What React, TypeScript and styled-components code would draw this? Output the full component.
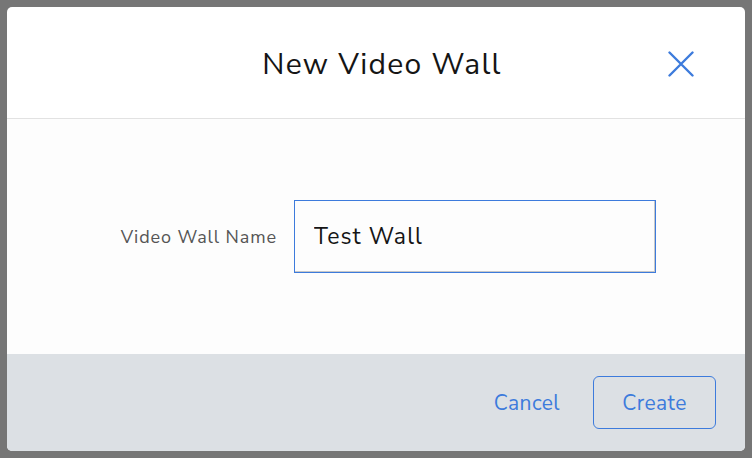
import React from "react";
import styled, { createGlobalStyle } from "styled-components";

const Global = createGlobalStyle`
  html, body { margin: 0; padding: 0; height: 100%; }
  body { background: #767676; font-family: "Nunito Sans", Lato, "Noto Sans", sans-serif; }
  #root { height: 100%; }
`;

const Backdrop = styled.div`
  width: 752px;
  height: 458px;
  padding: 7px;
  box-sizing: border-box;
  display: flex;
`;

const Dialog = styled.div`
  width: 738px;
  height: 444px;
  background: #ffffff;
  border-radius: 5px;
  overflow: hidden;
  display: flex;
  flex-direction: column;
`;

const Header = styled.div`
  height: 111px;
  border-bottom: 1px solid #e2e2e2;
  display: flex;
  align-items: center;
  justify-content: center;
  position: relative;
  flex-shrink: 0;
`;

const Title = styled.h1`
  margin: 3px 0 0 12px;
  font-size: 30px;
  font-weight: 400;
  color: #151515;
  letter-spacing: 1.3px;
`;

const CloseButton = styled.button`
  position: absolute;
  right: 51px;
  top: 44px;
  width: 26px;
  height: 26px;
  padding: 0;
  border: none;
  background: transparent;
  display: flex;
  align-items: center;
  justify-content: center;
  cursor: pointer;
`;

const Body = styled.div`
  flex: 1;
  display: flex;
  align-items: center;
  padding: 0 0 0 93px;
  background: #fdfdfd;
`;

const Label = styled.label`
  width: 177px;
  text-align: right;
  font-size: 18px;
  letter-spacing: 0.9px;
  color: #555555;
  margin-right: 17px;
`;

const Input = styled.input`
  width: 362px;
  height: 73px;
  box-sizing: border-box;
  border: 1px solid #3d7bdc;
  box-shadow: inset -1px -1px 0 #c8c8c8;
  padding: 0 19px;
  font-family: inherit;
  font-size: 23px;
  letter-spacing: 1.1px;
  color: #151515;
  background: #fdfdfd;
  outline: none;
`;

const Footer = styled.div`
  height: 97px;
  flex-shrink: 0;
  background: #dce0e4;
  display: flex;
  align-items: center;
  justify-content: flex-end;
  padding: 0 29px 0 0;
  gap: 33px;
`;

const TextButton = styled.button`
  border: none;
  background: transparent;
  color: #3d7bdc;
  font-family: inherit;
  font-size: 21px;
  letter-spacing: 0.4px;
  padding: 0;
  cursor: pointer;
`;

const OutlineButton = styled.button`
  width: 123px;
  height: 53px;
  border: 1px solid #3d7bdc;
  border-radius: 6px;
  background: transparent;
  color: #3d7bdc;
  font-family: inherit;
  font-size: 21px;
  letter-spacing: 0.4px;
  cursor: pointer;
`;

export default function App() {
  return (
    <>
      <Global />
      <Backdrop>
        <Dialog>
          <Header>
            <Title>New Video Wall</Title>
            <CloseButton aria-label="Close">
              <svg width="26" height="26" viewBox="0 0 26 26">
                <path d="M1.5 1.5 L24.5 24.5 M24.5 1.5 L1.5 24.5" stroke="#3d7bdc" strokeWidth="2.4" strokeLinecap="round" fill="none" />
              </svg>
            </CloseButton>
          </Header>
          <Body>
            <Label htmlFor="wall-name">Video Wall Name</Label>
            <Input id="wall-name" defaultValue="Test Wall" />
          </Body>
          <Footer>
            <TextButton>Cancel</TextButton>
            <OutlineButton>Create</OutlineButton>
          </Footer>
        </Dialog>
      </Backdrop>
    </>
  );
}
